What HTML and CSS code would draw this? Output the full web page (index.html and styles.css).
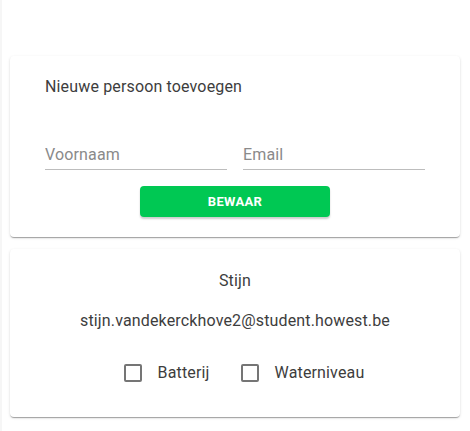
FILE: index.html
```html
<!DOCTYPE html>
<html lang="nl">
<head>
<meta charset="utf-8">
<title>Personen</title>
<link rel="stylesheet" href="styles.css">
</head>
<body>
<main class="page">
  <section class="card card-form">
    <h2 class="card-title">Nieuwe persoon toevoegen</h2>
    <div class="fields">
      <input class="field" type="text" placeholder="Voornaam">
      <input class="field" type="email" placeholder="Email">
    </div>
    <div class="actions">
      <button class="btn-save" type="button">BEWAAR</button>
    </div>
  </section>
  <section class="card card-person">
    <p class="person-name">Stijn</p>
    <p class="person-email">stijn.vandekerckhove2@student.howest.be</p>
    <div class="checks">
      <label class="check"><span class="box"></span><span class="check-label">Batterij</span></label>
      <label class="check"><span class="box"></span><span class="check-label">Waterniveau</span></label>
    </div>
  </section>
</main>
</body>
</html>
```
FILE: styles.css
```css
* { box-sizing: border-box; }
html, body { margin: 0; padding: 0; background: #fff; }
body {
  font-family: Roboto, "Liberation Sans", sans-serif;
  color: #3d3d3d;
  font-size: 16px;
  letter-spacing: 0.15px;
  border-left: 2px solid #f6f6f6;
  min-height: 431px;
}
.page {
  padding: 56px 10px 0 8px;
  display: flex;
  flex-direction: column;
  gap: 12px;
}
.card {
  background: #fff;
  border-radius: 4px;
  box-shadow: 0 2px 1px -1px rgba(0,0,0,.2), 0 1px 1px 0 rgba(0,0,0,.14), 0 1px 3px 0 rgba(0,0,0,.12);
}
.card-form {
  padding: 19px 35px 20px 35px;
  height: 181px;
}
.card-title {
  margin: 0;
  font-size: 16px;
  font-weight: 400;
  line-height: 24px;
}
.fields {
  margin-top: 41px;
  display: flex;
  gap: 16px;
}
.field {
  flex: 1;
  min-width: 0;
  height: 30px;
  border: none;
  border-bottom: 1px solid #bdbdbd;
  padding: 0;
  font-family: inherit;
  font-size: 16px;
  letter-spacing: 0.15px;
  color: #3d3d3d;
  outline: none;
  background: transparent;
}
.field::placeholder { color: #8a8a8a; }
.actions {
  margin-top: 16px;
  display: flex;
  justify-content: center;
}
.btn-save {
  width: 190px;
  height: 31px;
  border: none;
  border-radius: 4px;
  background: #00c853;
  color: #fff;
  font-family: inherit;
  font-weight: 700;
  font-size: 13px;
  letter-spacing: 0.3px;
  box-shadow: 0 2px 2px rgba(0,0,0,.2);
}
.card-person {
  padding: 20px 16px 32px 16px;
  height: 168px;
  text-align: center;
}
.person-name, .person-email {
  margin: 0;
  line-height: 24px;
}
.person-email { margin-top: 16px; }
.checks {
  margin-top: 28px;
  display: flex;
  justify-content: center;
  gap: 31px;
  padding-left: 18px;
}
.check {
  display: flex;
  align-items: center;
  gap: 16px;
  line-height: 24px;
}
.box {
  width: 18px;
  height: 18px;
  border: 2px solid #757575;
  border-radius: 2px;
}
```
